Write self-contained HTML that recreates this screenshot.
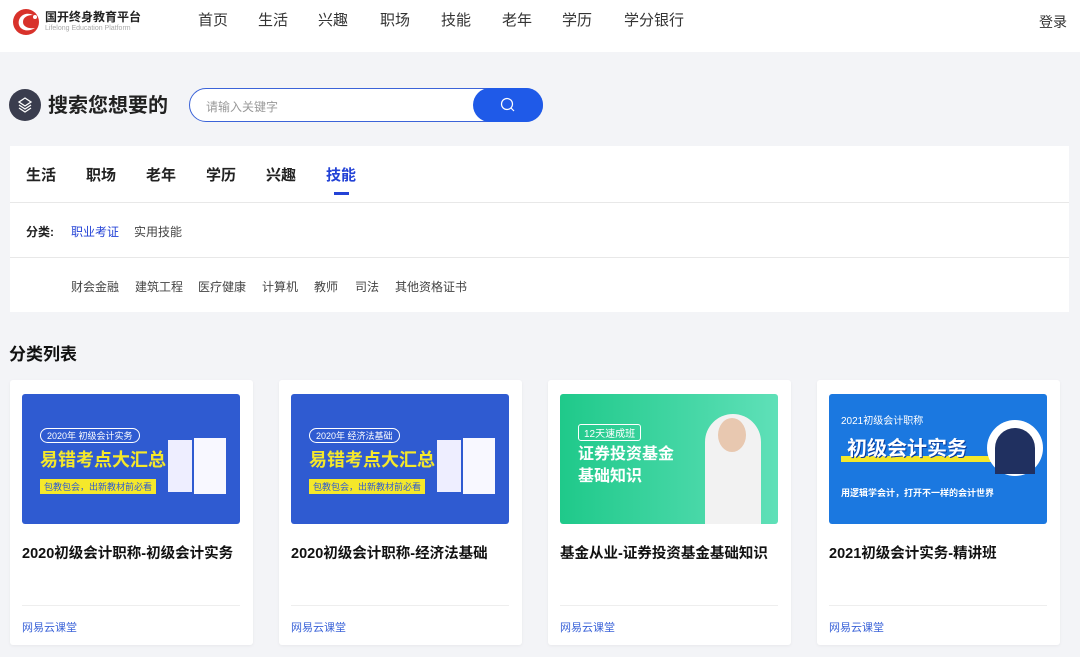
<!DOCTYPE html><html><head><meta charset="utf-8"><style>
*{margin:0;padding:0;box-sizing:border-box}
body{width:1080px;height:657px;overflow:hidden;background:#f3f4f7;font-family:"Liberation Sans","Noto Sans CJK SC",sans-serif;color:#222;position:relative}
.a{position:absolute;white-space:nowrap}
.hdr{left:0;top:0;width:1080px;height:52px;background:#fff}
.nav span{position:absolute;top:9px;font-size:15px;color:#333}
.panel{left:10px;top:146px;width:1059px;height:166px;background:#fff}
.card{background:#fff;width:243px;height:265px;top:380px;border-radius:3px;box-shadow:0 1px 3px rgba(0,0,0,.05)}
.img{position:absolute;left:12px;top:14px;width:218px;height:130px;border-radius:3px;overflow:hidden}
.tt{position:absolute;left:12px;top:162px;font-size:14.5px;font-weight:bold;color:#111;white-space:nowrap}
.ln{position:absolute;left:12px;top:225px;width:218px;height:1px;background:#eee}
.src{position:absolute;left:12px;top:239px;font-size:11px;color:#3b63d8}
.yl{color:#f5e82a;font-weight:bold;font-size:18px;position:absolute;white-space:nowrap}
.tabs span{position:absolute;white-space:nowrap}
.sub span{position:absolute;top:0}
</style></head><body>
<div class="a hdr"></div>
<svg class="a" style="left:11px;top:7px" width="30" height="30" viewBox="0 0 30 30"><circle cx="15" cy="15" r="13" fill="#d8322b"/><path d="M22 8 C14 4 6 10 8 18 C10 24 18 25 24 21 C18 22 12 20 12 15 C12 10 17 8 22 8Z" fill="#fff"/><circle cx="24" cy="10" r="2" fill="#fff"/></svg>
<div class="a" style="left:45px;top:8px;font-size:12px;font-weight:bold;color:#222">国开终身教育平台</div>
<div class="a" style="left:45px;top:25px;font-size:7px;color:#aaa">Lifelong Education Platform</div>
<div class="nav"><span style="left:198px">首页</span><span style="left:258px">生活</span><span style="left:318px">兴趣</span><span style="left:380px">职场</span><span style="left:441px">技能</span><span style="left:502px">老年</span><span style="left:562px">学历</span><span style="left:624px">学分银行</span><span style="left:1039px;top:12px;font-size:14px">登录</span></div>
<div class="a" style="left:9px;top:89px;width:32px;height:32px;border-radius:50%;background:#3a3d4e"></div>
<svg class="a" style="left:15px;top:95px" width="20" height="20" viewBox="0 0 20 20"><path d="M10 3 L16 7 L10 11 L4 7Z M4 10 L10 14 L16 10 M4 13 L10 17 L16 13" fill="none" stroke="#fff" stroke-width="1.3"/></svg>
<div class="a" style="left:48px;top:93px;font-size:20px;font-weight:bold;color:#222;line-height:26px">搜索您想要的</div>
<div class="a" style="left:189px;top:88px;width:354px;height:34px;border:1px solid #3b63d8;border-radius:17px;background:#fff"></div>
<div class="a" style="left:206px;top:98px;font-size:12px;color:#999">请输入关键字</div>
<div class="a" style="left:473px;top:88px;width:70px;height:34px;border-radius:17px;background:#1f5ae8"></div>
<svg class="a" style="left:499px;top:96px" width="18" height="18" viewBox="0 0 18 18"><circle cx="8" cy="8" r="5.5" fill="none" stroke="#fff" stroke-width="1.2"/><path d="M12 12 L15 15" stroke="#fff" stroke-width="1.2"/></svg>
<div class="a panel"></div>
<div class="a tabs" style="left:26px;top:164px;width:400px;height:22px;font-size:15px;font-weight:bold;color:#222">
<span style="left:0">生活</span><span style="left:60px">职场</span><span style="left:120px">老年</span><span style="left:180px">学历</span><span style="left:240px">兴趣</span><span style="left:300px;color:#2342d6">技能</span></div>
<div class="a" style="left:334px;top:192px;width:15px;height:3px;background:#2342d6"></div>
<div class="a" style="left:10px;top:202px;width:1059px;height:1px;background:#e8e8e8"></div>
<div class="a" style="left:26px;top:223px;font-size:12px;font-weight:bold">分类:</div>
<div class="a" style="left:71px;top:223px;font-size:12px;color:#2342d6">职业考证</div>
<div class="a" style="left:134px;top:223px;font-size:12px;color:#444">实用技能</div>
<div class="a" style="left:10px;top:257px;width:1059px;height:1px;background:#e8e8e8"></div>
<div class="a sub" style="left:0;top:278px;font-size:12px;color:#444"><span style="left:71px">财会金融</span><span style="left:135px">建筑工程</span><span style="left:198px">医疗健康</span><span style="left:262px">计算机</span><span style="left:314px">教师</span><span style="left:355px">司法</span><span style="left:395px">其他资格证书</span></div>
<div class="a" style="left:9px;top:340px;font-size:17px;font-weight:bold;color:#111">分类列表</div>

<div class="a card" style="left:10px"><div class="img" style="background:#2f5bd1"><div class="a" style="left:18px;top:34px;font-size:9px;color:#fff;border:1px solid #fff;border-radius:8px;padding:0 6px">2020年 初级会计实务</div><div class="yl" style="left:18px;top:52px">易错考点大汇总</div><div class="a" style="left:18px;top:85px;background:#f5e82a;color:#2f5bd1;font-size:9px;padding:1px 4px">包教包会，出新教材前必看</div><div class="a" style="left:146px;top:46px;width:24px;height:52px;background:#eef"></div><div class="a" style="left:172px;top:44px;width:32px;height:56px;background:#f8f8ff"></div></div><div class="tt">2020初级会计职称-初级会计实务</div><div class="ln"></div><div class="src">网易云课堂</div></div>
<div class="a card" style="left:279px"><div class="img" style="background:#2f5bd1"><div class="a" style="left:18px;top:34px;font-size:9px;color:#fff;border:1px solid #fff;border-radius:8px;padding:0 6px">2020年 经济法基础</div><div class="yl" style="left:18px;top:52px">易错考点大汇总</div><div class="a" style="left:18px;top:85px;background:#f5e82a;color:#2f5bd1;font-size:9px;padding:1px 4px">包教包会，出新教材前必看</div><div class="a" style="left:146px;top:46px;width:24px;height:52px;background:#eef"></div><div class="a" style="left:172px;top:44px;width:32px;height:56px;background:#f8f8ff"></div></div><div class="tt">2020初级会计职称-经济法基础</div><div class="ln"></div><div class="src">网易云课堂</div></div>
<div class="a card" style="left:548px"><div class="img" style="background:linear-gradient(90deg,#1fc98a,#5fe0b8)"><div class="a" style="left:18px;top:30px;font-size:10px;color:#fff;border:1px solid #fff;border-radius:3px;padding:0 5px">12天速成班</div><div class="a" style="left:18px;top:50px;font-size:16px;font-weight:bold;color:#fff;line-height:22px">证券投资基金<br>基础知识</div><div class="a" style="left:145px;top:20px;width:56px;height:110px;border-radius:28px 28px 0 0;background:#f2f2f2"></div><div class="a" style="left:158px;top:24px;width:28px;height:34px;border-radius:50%;background:#e8c8b0"></div></div><div class="tt">基金从业-证券投资基金基础知识</div><div class="ln"></div><div class="src">网易云课堂</div></div>
<div class="a card" style="left:817px"><div class="img" style="background:#1b78e0"><div class="a" style="left:12px;top:18px;font-size:10px;color:#fff">2021初级会计职称</div><div class="a" style="left:12px;top:62px;width:150px;height:6px;background:#f5e82a"></div><div class="a" style="left:18px;top:38px;font-size:20px;font-weight:bold;color:#fff;text-shadow:1px 1px 0 #0a3a9a">初级会计实务</div><div class="a" style="left:158px;top:26px;width:56px;height:56px;border-radius:50%;background:#fff"></div><div class="a" style="left:166px;top:34px;width:40px;height:46px;border-radius:20px 20px 0 0;background:#203060"></div><div class="a" style="left:12px;top:92px;font-size:9px;color:#fff;font-weight:bold">用逻辑学会计，打开不一样的会计世界</div></div><div class="tt">2021初级会计实务-精讲班</div><div class="ln"></div><div class="src">网易云课堂</div></div>
</body></html>
